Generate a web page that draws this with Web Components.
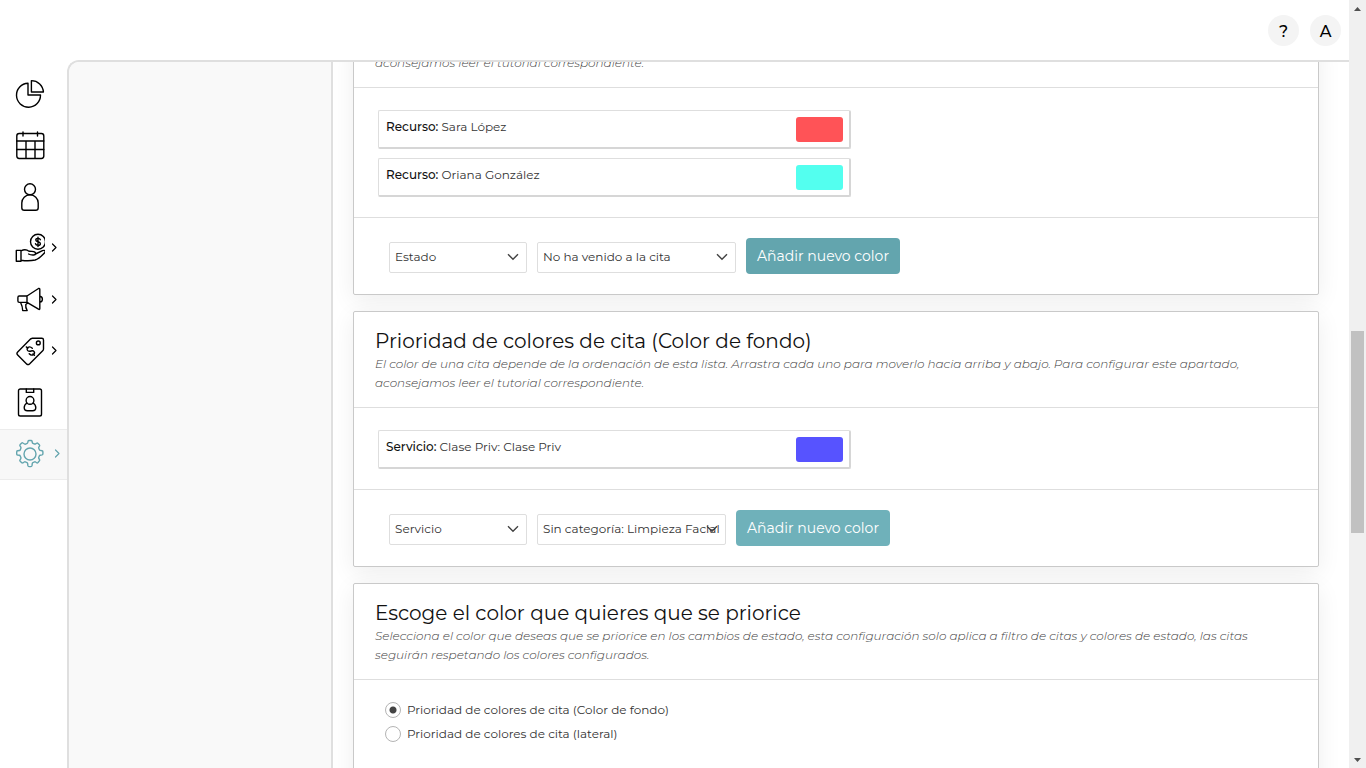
<!DOCTYPE html>
<html lang="es">
<head>
<meta charset="utf-8">
<title>Configuración de colores</title>
<style>
  html, body { height: 100%; }
  body { margin: 0; background: #fff; color: #333; font: 400 12px/19px Montserrat, Inter, "Open Sans", sans-serif; overflow: hidden; }
</style>
</head>
<body>
<app-shell>
  <top-bar slot="top"></top-bar>
  <side-nav slot="nav"></side-nav>
  <color-card intro="aconsejamos leer el tutorial correspondiente.">
    <color-item label="Recurso:" name="Sara López" color="#ff5357"></color-item>
    <color-item label="Recurso:" name="Oriana González" color="#53ffef"></color-item>
    <color-form slot="footer" kind="Estado" value="No ha venido a la cita" class="state"></color-form>
  </color-card>
  <color-card heading="Prioridad de colores de cita (Color de fondo)" intro="El color de una cita depende de la ordenación de esta lista. Arrastra cada uno para moverlo hacia arriba y abajo. Para configurar este apartado,|aconsejamos leer el tutorial correspondiente.">
    <color-item label="Servicio:" name="Clase Priv: Clase Priv" color="#5753ff"></color-item>
    <color-form slot="footer" kind="Servicio" value="Sin categoría: Limpieza Facial"></color-form>
  </color-card>
  <color-card heading="Escoge el color que quieres que se priorice" intro="Selecciona el color que deseas que se priorice en los cambios de estado, esta configuración solo aplica a filtro de citas y colores de estado, las citas|seguirán respetando los colores configurados.">
    <priority-choice></priority-choice>
  </color-card>
</app-shell>
<script>
const define = (name, render) => customElements.define(name, class extends HTMLElement {
  connectedCallback() {
    if (!this.shadowRoot) this.attachShadow({ mode: 'open' }).innerHTML = render(this);
  }
});

define('color-item', el => `
<style>
  :host { display: flex; justify-content: space-between; box-sizing: border-box; width: 473px; max-width: 100%; height: 39px; padding: 6px 6px 5px 7px; border: 1px solid #dedede; border-right: 2px solid #d6d6d6; border-bottom: 2px solid #d6d6d6; border-radius: 2px; background: #fff; cursor: move; }
  b { font-weight: 500; color: #111; }
  i { width: 47px; height: 25px; border-radius: 3px; background: ${el.getAttribute('color')}; }
</style>
<span><b>${el.getAttribute('label')}</b> ${el.getAttribute('name')}</span><i></i>`);

define('color-form', el => `
<style>
  :host { display: flex; align-items: center; gap: 10px; }
  select { appearance: none; box-sizing: border-box; width: 138px; height: 31px; margin: 2px 0 0; padding: 0 5px 2px; border: 1px solid #dedede; border-radius: 2px; color: #333; font: inherit;
    background: #fff url("data:image/svg+xml,%3Csvg xmlns='http://www.w3.org/2000/svg' width='12' height='8'%3E%3Cpath d='M1 1.2l5 5 5-5' fill='none' stroke='%23444' stroke-width='1.4'/%3E%3C/svg%3E") no-repeat right 7px center; }
  select + select { width: 189px; }
  :host(.state) select + select { width: 199px; }
  button { width: 154px; height: 36px; padding: 0; border: 0; border-radius: 4px; background: #6fb1ba; color: #fff; font: 400 14px/20px Montserrat, Inter, "Open Sans", sans-serif; }
  :host(.state) button { background: #63a5ae; }
</style>
<select aria-label="Tipo"><option>${el.getAttribute('kind')}</option></select>
<select aria-label="Valor"><option>${el.getAttribute('value')}</option></select>
<button type="button">Añadir nuevo color</button>`);

define('priority-choice', () => `
<style>
  :host { display: grid; gap: 5px; padding: 0 7px 36px; margin-top: -2px; }
  label { display: flex; align-items: center; gap: 6px; }
  input { appearance: none; box-sizing: border-box; width: 16px; height: 16px; margin: 0; border: 1px solid #b4b4b4; border-radius: 50%; background: #fff; }
  input:checked { background: radial-gradient(circle, #444 3px, #fff 4px); }
</style>
<label><input type="radio" name="p" checked>Prioridad de colores de cita (Color de fondo)</label>
<label><input type="radio" name="p">Prioridad de colores de cita (lateral)</label>`);

define('color-card', el => `
<style>
  :host { display: block; border: 1px solid #c9c9c9; border-radius: 2px; background: #fff; box-shadow: 0 6px 24px rgba(0,0,0,.07); }
  header { padding: 16px 21px 15px; border-bottom: 1px solid #dedede; }
  h2 { margin: 0; color: #111; font-weight: 400; font-size: 20px; line-height: 26px; }
  p { margin: 0; color: #444; font-weight: 300; font-style: italic; }
  .body { display: grid; gap: 9px; padding: 22px 24px 20px; }
  footer { padding: 20px 35px; border-top: 1px solid #dedede; }
</style>
<header>${el.hasAttribute('heading') ? `<h2>${el.getAttribute('heading')}</h2>` : ''}<p>${el.getAttribute('intro').replace('|', '<br>')}</p></header>
<div class="body"><slot></slot></div>
${el.querySelector('[slot=footer]') ? '<footer><slot name="footer"></slot></footer>' : ''}`);

define('top-bar', () => `
<style>
  :host { display: flex; justify-content: flex-end; align-items: center; gap: 11px; height: 60px; padding-right: 8px; background: #fff; }
  button { width: 31px; height: 31px; padding: 4px 0 0; border: 0; border-radius: 50%; background: #f4f4f4; color: #000; font: 500 16px/24px Montserrat, Inter, "Open Sans", sans-serif; }
</style>
<button type="button">?</button><button type="button">A</button>`);

const icons = [
  ['Informes', '<path d="M13 4.2A12 12 0 1 0 25.5 16H13z"/><path d="M16.4 1.6V13H28.4A12 12 0 0 0 16.4 1.6z"/>'],
  ['Agenda', '<rect x="1.8" y="3.5" width="27" height="25" rx="2.4"/><path d="M1.8 11h27M1.8 19.5h27M11 11v17M20 11v17M8 2V6M22.5 2V6"/>'],
  ['Clientes', '<circle cx="15" cy="7.3" r="5.5"/><path d="M9.3 28.3q-2.5 0-2.5-2.6V21a8.2 8.2 0 0 1 16.4 0v4.7q0 2.6-2.5 2.6z"/>'],
  ['Ventas', '<circle cx="23" cy="8.8" r="7.5"/><path d="M25.4 6.7q-.4-1.300-2.400-1.300-2.200 0-2.200 1.700 0 1.200 2.200 1.700 2.400.5 2.400 1.900 0 1.600-2.400 1.600-2.100 0-2.500-1.500M23 4.300V13.500"/><path d="M1.3 17.400H6v10.800H1.3zM6 17.800q4.600-2.200 8 .5l3 .1q3.600.1 3.600 2.200 0 1.200-2 1.400-3 .2-5-1M20.500 21l7-3.400q2.300-.7 2.600.8.2.8-.5 1.400-5.500 6-9.400 7.200-6.500 1.500-14.200.2"/>', 1],
  ['Marketing', '<path d="M4.200 11H12L23.500 3.500q1.300-.5 1.300.9v19.100q0 1.400-1.300.7L12 17.400H4.200q-1.300 0-1.300-1.400v-3.600q0-1.400 1.300-1.400zM12 11v6.400M25 11.300q2.400.5 2.400 2.900t-2.400 2.900M5.600 17.500q2 4 2.100 8.100h4.500q-1.900-3-1.400-6.100l2.100-1.700"/>', 1],
  ['Tarifas', '<path d="M17.500 2.200h9.300q1.700 0 1.700 1.700V13q0 1-.8 1.800L14.500 27.900q-1.500 1.400-2.900 0l-8.900-9q-1.500-1.500 0-3L15.500 3z"/><circle cx="23.300" cy="6.900" r="1.900"/><path d="M17.300 12.300q-2.300-2.300-4.200-.9-1.900 1.800-.2 3.300 1.300 1 3.200.3 2.100-.6 3 .6 1.100 1.700-.7 3-2 1.400-4.200-.8M11.300 10.900l1.500 1.300M17.900 17.900l1.500 1.400"/>', 1],
  ['Personal', '<rect x="3.500" y="1" width="23" height="27" rx="1.800"/><path d="M11.300 1v3.400h7.400V1"/><circle cx="15" cy="12.400" r="3.900"/><path d="M12 15q-2.800 1.700-2.800 4.600 0 3.200 3.200 3.200h5.200q3.200 0 3.200-3.200 0-2.900-2.800-4.600"/>'],
  ['Configuración', '<path d="M12.200 4.300q.5-.2.6-.8l.2-1.100q.2-.9 1.100-.9h1.900q.9 0 1.100.9l.2 1.100q.1.600.6.8l1.700.7q.6.200 1-.1l1-.7q.7-.5 1.400.2l1.300 1.300q.7.700.2 1.400l-.7 1q-.3.500-.1 1l.7 1.700q.2.500.8.600l1.800.3q.9.200.9 1.100v2q0 .9-.9 1.100l-1.800.3q-.6.100-.8.600l-.7 1.700q-.2.500.1 1l.7 1q.5.700-.2 1.400L23 23.500q-.7.700-1.400.2l-1-.7q-.5-.3-1-.1l-1.700.7q-.5.200-.6.800l-.3 2.300q-.2.900-1.100.9H14q-.9 0-1.100-.9l-.3-2.300q-.1-.6-.6-.8l-1.700-.7q-.5-.2-1 .1l-1.400.8q-.7.500-1.400-.2l-1.300-1.300q-.7-.7-.2-1.400l.8-1.300q.3-.5.1-1l-.7-1.700q-.2-.5-.8-.6l-1.800-.3q-.9-.2-.9-1.100v-2q0-.9.900-1.100l1.800-.3q.6-.1.8-.6l.7-1.700q.2-.5-.1-1L5 6.900q-.5-.7.200-1.400l1.300-1.300q.7-.7 1.400-.2l1.600 1q.5.300 1 .1z"/><circle cx="15" cy="15" r="6"/>', 1]
];
define('side-nav', () => `
<style>
  :host { display: block; padding-top: 8px; background: #fff; }
  nav { display: grid; grid-auto-rows: 1fr; height: 412px; }
  a { display: flex; align-items: center; box-sizing: border-box; gap: 6px; padding-left: 15px; color: #000; text-decoration: none; border: solid transparent; border-width: 1px 0; }
  a:last-child { background: #f8f8f8; border-color: #ececec; color: #63a5ae; gap: 9px; }
  svg { flex: none; fill: none; stroke: currentColor; stroke-width: 1.4; stroke-linejoin: round; stroke-linecap: round; }
  .arrow { stroke-width: 1.2; }
</style>
<nav>${icons.map(([name, path, more]) => `<a href="#" aria-label="${name}"><svg width="30" height="30" viewBox="0 0 30 30">${path}</svg>${more ? '<svg class="arrow" width="6" height="10" viewBox="0 0 6 10"><path d="M1.500 1 5 4.500l-3.500 3.500"/></svg>' : ''}</a>`).join('')}</nav>`);

define('page-scrollbar', () => `
<style>
  :host { display: grid; grid-template-rows: 17px 314fr 202fr 218fr 17px; background: #f0f0f0; justify-items: center; }
  svg { fill: #505050; align-self: center; }
  .thumb { grid-row: 3; width: 13px; background: #c1c1c1; }
  .down { grid-row: 5; }
</style>
<svg width="7" height="4"><path d="M0 4 3.500 0 7 4z"/></svg><div class="thumb"></div><svg class="down" width="7" height="4"><path d="M0 0h7L3.500 4z"/></svg>`);

define('app-shell', () => `
<style>
  :host { display: grid; grid-template: auto minmax(0, 1fr) / 67px minmax(0, 1fr) 17px; height: 100vh; }
  .top { grid-column: 1 / 3; }
  .nav { grid-column: 1; }
  .main { grid-column: 2; display: grid; grid-template-columns: 262px minmax(0, 1fr); border: solid #dfdfdf; border-width: 2px 0 0 2px; border-radius: 12px 0 0 0; overflow: hidden; }
  aside { background: #f9f9f9; }
  main { display: flex; flex-direction: column; gap: 16px; min-height: 0; margin-top: -26px; padding: 0 30px 0 20px; border-left: 2px solid #dfdfdf; }
  page-scrollbar { grid-column: 3; grid-row: 1 / 3; }
  ::slotted(color-card) { flex: none; }
</style>
<div class="top"><slot name="top"></slot></div>
<div class="nav"><slot name="nav"></slot></div>
<div class="main"><aside></aside><main><slot></slot></main></div>
<page-scrollbar></page-scrollbar>`);
</script>
</body>
</html>
